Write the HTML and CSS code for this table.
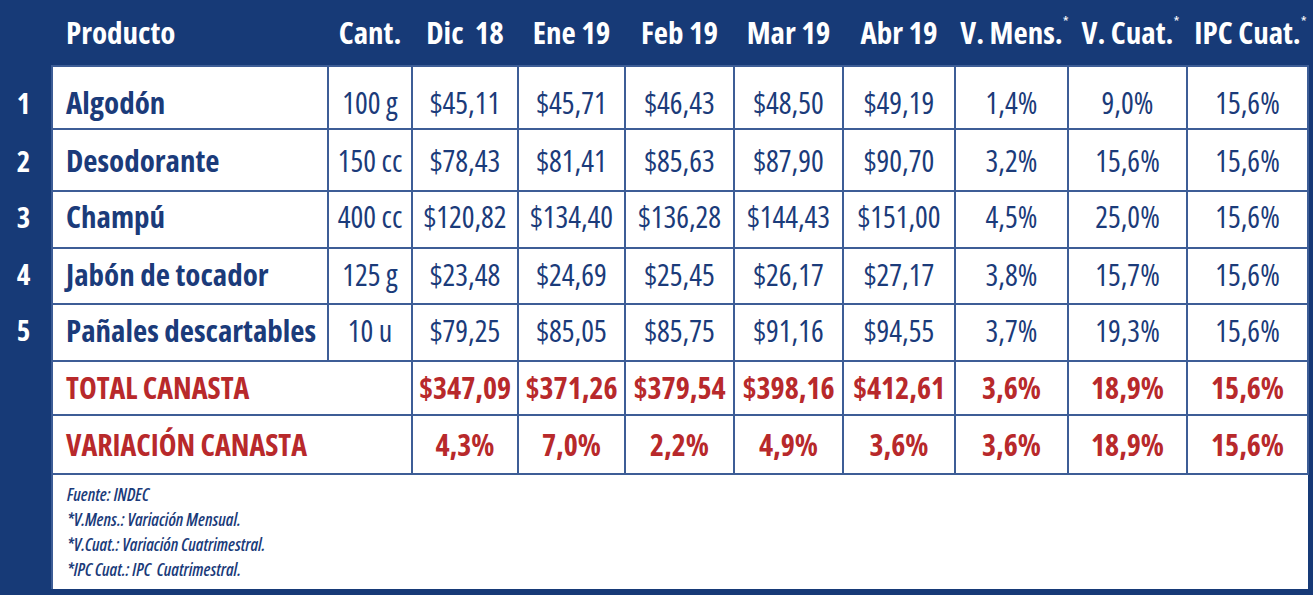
FILE: index.html
```html
<!DOCTYPE html>
<html lang="es">
<head>
<meta charset="utf-8">
<title>Canasta</title>
<link rel="stylesheet" href="styles.css">
</head>
<body>
<table class="canasta">
  <colgroup>
    <col class="c-num"><col class="c-prod"><col class="c-cant"><col class="c-dic"><col class="c-ene"><col class="c-feb"><col class="c-mar"><col class="c-abr"><col class="c-vm"><col class="c-vc"><col class="c-ipc">
  </colgroup>
  <thead>
    <tr class="head">
      <th class="num"></th>
      <th class="prod">Producto</th>
      <th>Cant.</th>
      <th>Dic&nbsp; 18</th>
      <th>Ene 19</th>
      <th>Feb 19</th>
      <th>Mar 19</th>
      <th>Abr 19</th>
      <th>V. Mens.<span class="ast">*</span></th>
      <th>V. Cuat.<span class="ast">*</span></th>
      <th>IPC Cuat.<span class="ast">*</span></th>
    </tr>
  </thead>
  <tbody>
    <tr class="r1">
      <td class="num">1</td><td class="prod">Algodón</td><td>100 g</td>
      <td>$45,11</td><td>$45,71</td><td>$46,43</td><td>$48,50</td><td>$49,19</td><td>1,4%</td><td>9,0%</td><td>15,6%</td>
    </tr>
    <tr class="r2">
      <td class="num">2</td><td class="prod">Desodorante</td><td>150 cc</td>
      <td>$78,43</td><td>$81,41</td><td>$85,63</td><td>$87,90</td><td>$90,70</td><td>3,2%</td><td>15,6%</td><td>15,6%</td>
    </tr>
    <tr class="r3">
      <td class="num">3</td><td class="prod">Champú</td><td>400 cc</td>
      <td>$120,82</td><td>$134,40</td><td>$136,28</td><td>$144,43</td><td>$151,00</td><td>4,5%</td><td>25,0%</td><td>15,6%</td>
    </tr>
    <tr class="r4">
      <td class="num">4</td><td class="prod">Jabón de tocador</td><td>125 g</td>
      <td>$23,48</td><td>$24,69</td><td>$25,45</td><td>$26,17</td><td>$27,17</td><td>3,8%</td><td>15,7%</td><td>15,6%</td>
    </tr>
    <tr class="r5">
      <td class="num">5</td><td class="prod">Pañales descartables</td><td>10 u</td>
      <td>$79,25</td><td>$85,05</td><td>$85,75</td><td>$91,16</td><td>$94,55</td><td>3,7%</td><td>19,3%</td><td>15,6%</td>
    </tr>
    <tr class="total">
      <td class="num"></td><td class="prod" colspan="2">TOTAL CANASTA</td>
      <td>$347,09</td><td>$371,26</td><td>$379,54</td><td>$398,16</td><td>$412,61</td><td>3,6%</td><td>18,9%</td><td>15,6%</td>
    </tr>
    <tr class="variacion">
      <td class="num"></td><td class="prod" colspan="2">VARIACIÓN CANASTA</td>
      <td>4,3%</td><td>7,0%</td><td>2,2%</td><td>4,9%</td><td>3,6%</td><td>3,6%</td><td>18,9%</td><td>15,6%</td>
    </tr>
    <tr class="notes">
      <td class="num"></td>
      <td class="notes-cell" colspan="10">
        <p>Fuente: INDEC</p>
        <p>*V.Mens.: Variación Mensual.</p>
        <p>*V.Cuat.: Variación Cuatrimestral.</p>
        <p>*IPC Cuat.: IPC&nbsp; Cuatrimestral.</p>
      </td>
    </tr>
  </tbody>
</table>
</body>
</html>
```
FILE: styles.css
```css
html, body {
  margin: 0;
  padding: 0;
}
body {
  background: #173a77;
  width: 1313px;
  height: 595px;
  overflow: hidden;
  font-family: "Open Sans", sans-serif;
  font-stretch: 75%;
  color: #1b3b7a;
}
.canasta {
  border-collapse: collapse;
  table-layout: fixed;
  width: 1308px;
}
.c-num { width: 52px; }
.c-prod { width: 276px; }
.c-cant { width: 84px; }
.c-dic { width: 106px; }
.c-ene { width: 107px; }
.c-feb { width: 109px; }
.c-mar { width: 109px; }
.c-abr { width: 112px; }
.c-vm { width: 113px; }
.c-vc { width: 119px; }
.c-ipc { width: 121px; }

.canasta th, .canasta td {
  padding: 0;
  text-align: center;
  vertical-align: middle;
  white-space: nowrap;
  line-height: 1.2;
}
.head th {
  height: 65px;
  color: #fff;
  font-weight: bold;
  font-size: 31px;
  font-stretch: 77%;
  border: none;
}
.head th.prod { text-align: left; padding-left: 14px; }
.ast {
  display: inline-block;
  font-size: 15px;
  font-weight: normal;
  vertical-align: top;
  margin-left: 0;
  width: 0;
  line-height: 1;
}
.canasta tbody td {
  background: #fff;
  border: 2px solid #3d5d96;
  font-size: 30px;
}
.canasta tbody td.num {
  background: #173a77;
  border: none;
  color: #fff;
  font-weight: bold;
  font-size: 29px;
  padding-right: 4px;
}
.canasta tbody td.prod {
  text-align: left;
  padding-left: 13px;
  font-weight: bold;
  font-size: 31px;
  font-stretch: 77%;
}
.canasta tbody .r1 td { height: 50px; padding-top: 11px; }
.canasta tbody .r2 td { height: 58px; padding-top: 2px; }
.canasta tbody .r3 td { height: 50px; padding-bottom: 5px; }
.canasta tbody .r4 td { height: 51px; padding-bottom: 3px; }
.canasta tbody .r5 td { height: 51px; padding-bottom: 4px; }
.canasta tbody .total td { height: 52px; }
.canasta tbody .variacion td { height: 57px; }
.total td, .variacion td {
  color: #b8292b;
  font-weight: bold;
}
.canasta tbody .total td.prod, .canasta tbody .variacion td.prod {
  font-size: 30px;
  font-stretch: 75%;
}
.canasta tbody .total td.num, .canasta tbody .variacion td.num { color: #fff; }
.canasta tbody td.notes-cell {
  height: 107px;
  text-align: left;
  vertical-align: top;
  padding: 7px 0 0 14px;
  font-size: 17.5px;
  font-stretch: 76%;
  font-weight: 600;
  font-style: italic;
  border-bottom: none;
  border-right: none;
}
.notes-cell p {
  margin: 0;
  line-height: 25px;
}
```
